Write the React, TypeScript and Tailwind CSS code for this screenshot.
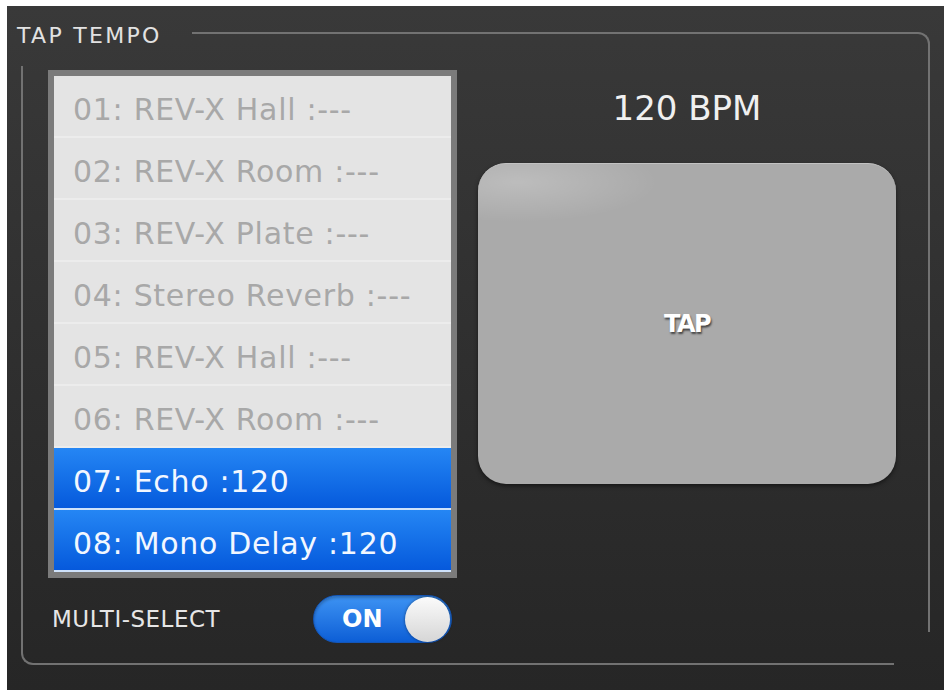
const presets = [
  { id: "01", name: "REV-X Hall", bpm: "---", on: false },
  { id: "02", name: "REV-X Room", bpm: "---", on: false },
  { id: "03", name: "REV-X Plate", bpm: "---", on: false },
  { id: "04", name: "Stereo Reverb", bpm: "---", on: false },
  { id: "05", name: "REV-X Hall", bpm: "---", on: false },
  { id: "06", name: "REV-X Room", bpm: "---", on: false },
  { id: "07", name: "Echo", bpm: "120", on: true },
  { id: "08", name: "Mono Delay", bpm: "120", on: true },
];

function PresetRow({ id, name, bpm, on }: (typeof presets)[number]) {
  return (
    <div
      className={`flex h-[62px] items-center border-b-2 pl-[19px] pt-[6px] text-[30px] tracking-[0.7px] ${
        on
          ? "border-[#cfe2fb] bg-gradient-to-b from-[#2586f4] to-[#0659dc] text-[#f2f7ff]"
          : "border-[#ececec] bg-[#e4e4e4] text-[#a8a8a8]"
      }`}
    >
      {id}: {name} :{bpm}
    </div>
  );
}

function Toggle() {
  return (
    <div className="flex h-[48px] w-[139px] items-center justify-between rounded-full border border-[#1456b8] bg-gradient-to-b from-[#3d93f3] to-[#0c5ed6] pl-[28px] pr-[1px] shadow-[inset_0_2px_3px_rgba(0,0,0,0.25)]">
      <span className="text-[24px] font-bold leading-none text-white">ON</span>
      <span className="h-[45px] w-[45px] rounded-full bg-gradient-to-b from-[#fbfbfb] to-[#d6d6d6] shadow-[0_0_3px_rgba(0,0,0,0.5)]" />
    </div>
  );
}

export default function App() {
  return (
    <div className="h-[690px] w-[948px] bg-white pl-[7px] pt-[6px] font-['DejaVu_Sans',sans-serif]">
      <div className="relative h-[684px] w-[937px] bg-gradient-to-b from-[#393939] to-[#262626] pt-[17px]">
        {/* frame lines */}
        <div className="absolute left-[185px] top-[26px] h-[600px] w-[738px] rounded-tr-[12px] border-r-2 border-t-2 border-[#727272]" />
        <div className="absolute left-[14px] top-[60px] h-[599px] w-[873px] rounded-bl-[12px] border-b-2 border-l-2 border-[#727272]" />

        <div className="pl-[10px] text-[22px] leading-[26px] tracking-[2.3px] text-[#e2e2e2]">
          TAP TEMPO
        </div>

        <div className="relative mt-[21px] flex pl-[41px]">
          <div className="w-[409px]">
            <div className="border-[6px] border-[#7b7b7b] bg-[#e4e4e4]">
              {presets.map((p) => (
                <PresetRow key={p.id} {...p} />
              ))}
            </div>
            <div className="mt-[17px] flex items-center">
              <span className="w-[265px] pl-[4px] text-[23px] tracking-[0.5px] text-[#e6e6e6]">
                MULTI-SELECT
              </span>
              <Toggle />
            </div>
          </div>

          <div className="ml-[21px] w-[418px]">
            <div className="mt-[18px] text-center text-[34px] leading-[40px] text-[#f0f0f0]">
              120 BPM
            </div>
            <button className="mt-[35px] flex h-[321px] w-[418px] items-center justify-center rounded-[28px] border-t border-[#c2c2c2] bg-[#aaaaaa] bg-[radial-gradient(ellipse_140px_40px_at_40px_18px,rgba(255,255,255,0.22),transparent)] shadow-[0_2px_4px_rgba(0,0,0,0.5)]">
              <span className="text-[24px] font-bold tracking-[-1.5px] text-white [text-shadow:1px_2px_2px_rgba(0,0,0,0.6)]">
                TAP
              </span>
            </button>
          </div>
        </div>
      </div>
    </div>
  );
}
